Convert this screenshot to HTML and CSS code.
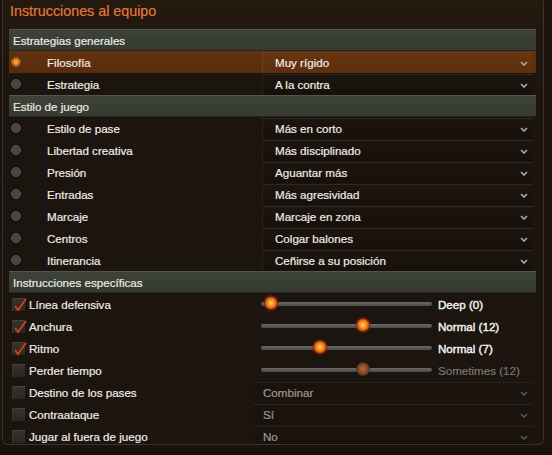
FILE: index.html
```html
<!DOCTYPE html>
<html lang="es">
<head>
  <meta charset="UTF-8" />
  <title>Instrucciones al equipo</title>
  <link rel="stylesheet" href="styles.css">
</head>
<body>
  <div class="frame">
    <h1 class="title">Instrucciones al equipo</h1>

    <div class="panel">
      <!-- Estrategias generales -->
      <div class="section-head">Estrategias generales</div>
      <div class="row active">
        <span class="radio"></span>
        <span class="label">Filosofía</span>
        <div class="select">Muy rígido<svg class="chev" viewBox="0 0 8 5"><polyline points="1,1 4,4 7,1" /></svg></div>
      </div>
      <div class="row">
        <span class="radio"></span>
        <span class="label">Estrategia</span>
        <div class="select">A la contra<svg class="chev" viewBox="0 0 8 5"><polyline points="1,1 4,4 7,1" /></svg></div>
      </div>

      <!-- Estilo de juego -->
      <div class="section-head">Estilo de juego</div>
      <div class="row">
        <span class="radio"></span>
        <span class="label">Estilo de pase</span>
        <div class="select">Más en corto<svg class="chev" viewBox="0 0 8 5"><polyline points="1,1 4,4 7,1" /></svg></div>
      </div>
      <div class="row">
        <span class="radio"></span>
        <span class="label">Libertad creativa</span>
        <div class="select">Más disciplinado<svg class="chev" viewBox="0 0 8 5"><polyline points="1,1 4,4 7,1" /></svg></div>
      </div>
      <div class="row">
        <span class="radio"></span>
        <span class="label">Presión</span>
        <div class="select">Aguantar más<svg class="chev" viewBox="0 0 8 5"><polyline points="1,1 4,4 7,1" /></svg></div>
      </div>
      <div class="row">
        <span class="radio"></span>
        <span class="label">Entradas</span>
        <div class="select">Más agresividad<svg class="chev" viewBox="0 0 8 5"><polyline points="1,1 4,4 7,1" /></svg></div>
      </div>
      <div class="row">
        <span class="radio"></span>
        <span class="label">Marcaje</span>
        <div class="select">Marcaje en zona<svg class="chev" viewBox="0 0 8 5"><polyline points="1,1 4,4 7,1" /></svg></div>
      </div>
      <div class="row">
        <span class="radio"></span>
        <span class="label">Centros</span>
        <div class="select">Colgar balones<svg class="chev" viewBox="0 0 8 5"><polyline points="1,1 4,4 7,1" /></svg></div>
      </div>
      <div class="row">
        <span class="radio"></span>
        <span class="label">Itinerancia</span>
        <div class="select">Ceñirse a su posición<svg class="chev" viewBox="0 0 8 5"><polyline points="1,1 4,4 7,1" /></svg></div>
      </div>

      <!-- Instrucciones específicas -->
      <div class="section-head">Instrucciones específicas</div>
      <div class="row spec">
        <span class="check on"><svg viewBox="0 0 14 14"><polyline points="2,8 5,12 13,1" /></svg></span>
        <span class="label">Línea defensiva</span>
        <div class="slider"><span class="knob" style="left: 10px"></span></div>
        <span class="value">Deep (0)</span>
      </div>
      <div class="row spec">
        <span class="check on"><svg viewBox="0 0 14 14"><polyline points="2,8 5,12 13,1" /></svg></span>
        <span class="label">Anchura</span>
        <div class="slider"><span class="knob" style="left: 102px"></span></div>
        <span class="value">Normal (12)</span>
      </div>
      <div class="row spec">
        <span class="check on"><svg viewBox="0 0 14 14"><polyline points="2,8 5,12 13,1" /></svg></span>
        <span class="label">Ritmo</span>
        <div class="slider"><span class="knob" style="left: 59px"></span></div>
        <span class="value">Normal (7)</span>
      </div>
      <div class="row spec">
        <span class="check"></span>
        <span class="label">Perder tiempo</span>
        <div class="slider off"><span class="knob" style="left: 102px"></span></div>
        <span class="value off">Sometimes (12)</span>
      </div>
      <div class="row spec">
        <span class="check"></span>
        <span class="label">Destino de los pases</span>
        <div class="select off">Combinar<svg class="chev" viewBox="0 0 8 5"><polyline points="1,1 4,4 7,1" /></svg></div>
      </div>
      <div class="row spec">
        <span class="check"></span>
        <span class="label">Contraataque</span>
        <div class="select off">Sí<svg class="chev" viewBox="0 0 8 5"><polyline points="1,1 4,4 7,1" /></svg></div>
      </div>
      <div class="row spec">
        <span class="check"></span>
        <span class="label">Jugar al fuera de juego</span>
        <div class="select off">No<svg class="chev" viewBox="0 0 8 5"><polyline points="1,1 4,4 7,1" /></svg></div>
      </div>
    </div>
  </div>
</body>
</html>
```

FILE: styles.css
```css
body {
  margin: 0;
  background-color: #1a130d;
  font-family: "Liberation Sans", Arial, sans-serif;
  font-size: 11.6px;
  color: #f0ece8;
  -webkit-text-stroke: 0.2px;
  height: 455px;
  overflow: hidden;
}

.frame {
  margin-left: 2px;
  width: 528px;
  height: 444px;
  padding: 0 6px;
  border: 1px solid #3a332c;
  border-top: none;
  border-radius: 0 0 6px 6px;
  background: linear-gradient(#24190f, #1c140e 120px, #1b140e);
  overflow: hidden;
}

.title {
  margin: 0;
  height: 29px;
  padding-left: 1px;
  font-size: 14.3px;
  font-weight: normal;
  line-height: 23px;
  color: #e2773a;
}

.panel {
  width: 527px;
  background-color: #1c140e;
}

/* Section header bars */
.section-head {
  height: 20px;
  line-height: 21px;
  padding-left: 4px;
  color: #ece9e4;
  background: linear-gradient(#3e433a, #363a31);
  border-top: 1px solid #51564b;
  border-bottom: 1px solid #23251e;
}

.row {
  display: flex;
  align-items: center;
  height: 22px;
}
.row.active {
  background: linear-gradient(#62310f, #5a2b0c);
}

.radio {
  width: 8px;
  height: 8px;
  margin: 0 26px 0 2px;
  border-radius: 50%;
  border: 1px solid #5d5955;
  background: radial-gradient(circle, #4a4644 45%, #3c3936 100%);
  box-shadow: 0 0 1px #000;
}
.row.active .radio {
  border-color: #a86a34;
  background: radial-gradient(circle, #f7a020 30%, #b5641f 60%, #8b4a1c 100%);
}

.label {
  width: 215px;
  flex-shrink: 0;
}

.select {
  position: relative;
  width: 258px;
  height: 20px;
  line-height: 20px;
  padding-left: 12px;
  margin-top: 1px;
  background: linear-gradient(#1d150f, #170f0a);
  border-top: 1px solid #2f2923;
  border-left: 1px solid #28221c;
}
.row.active .select {
  background: linear-gradient(#67350f, #5d2e0d);
  border-color: #6e4020;
}

.chev {
  position: absolute;
  right: 5px;
  top: 8px;
  width: 8px;
  height: 5px;
}
.chev polyline {
  fill: none;
  stroke: #a9abad;
  stroke-width: 1.6;
}

/* Instrucciones específicas */
.row.spec .label {
  width: 224px;
  margin-left: 4px;
}

.check {
  position: relative;
  width: 12px;
  height: 12px;
  margin-left: 3px;
  background: linear-gradient(#38322c, #2b2621);
  border-top: 1px solid #45403a;
  border-left: 1px solid #3a342e;
}
.check svg {
  position: absolute;
  left: 0;
  top: -1px;
  width: 14px;
  height: 14px;
}
.check polyline {
  fill: none;
  stroke: #d8401c;
  stroke-width: 1.8;
}

.slider {
  position: relative;
  width: 171px;
  height: 4px;
  margin-left: 8px;
  border-radius: 2px;
  background: linear-gradient(#6a6a6a, #4a4a4a);
}
.knob {
  position: absolute;
  top: -6px;
  width: 12px;
  height: 12px;
  margin-left: -7px;
  border-radius: 50%;
  border: 1px solid #7a1e0a;
  background: radial-gradient(circle, #ffe08a 0%, #ffa020 30%, #e0601a 60%, #8a2a10 100%);
  box-shadow: 0 0 2px #c04010;
}
.slider.off .knob {
  border-color: #4a2a1a;
  background: radial-gradient(circle, #b07040 0%, #8a4e28 45%, #5e3018 100%);
  box-shadow: none;
}

.value {
  margin-left: 6px;
  -webkit-text-stroke: 0.4px;
  color: #f4f4f4;
}
.value.off {
  -webkit-text-stroke: 0.2px;
  color: #7b7672;
}

.row.spec .select {
  width: 270px;
  padding-left: 10px;
  border-left: none;
  background: #1a120c;
  border-top: 1px solid #2a231d;
}
.select.off {
  color: #a09a94;
}
.select.off .chev polyline {
  stroke: #5a5856;
}
```
